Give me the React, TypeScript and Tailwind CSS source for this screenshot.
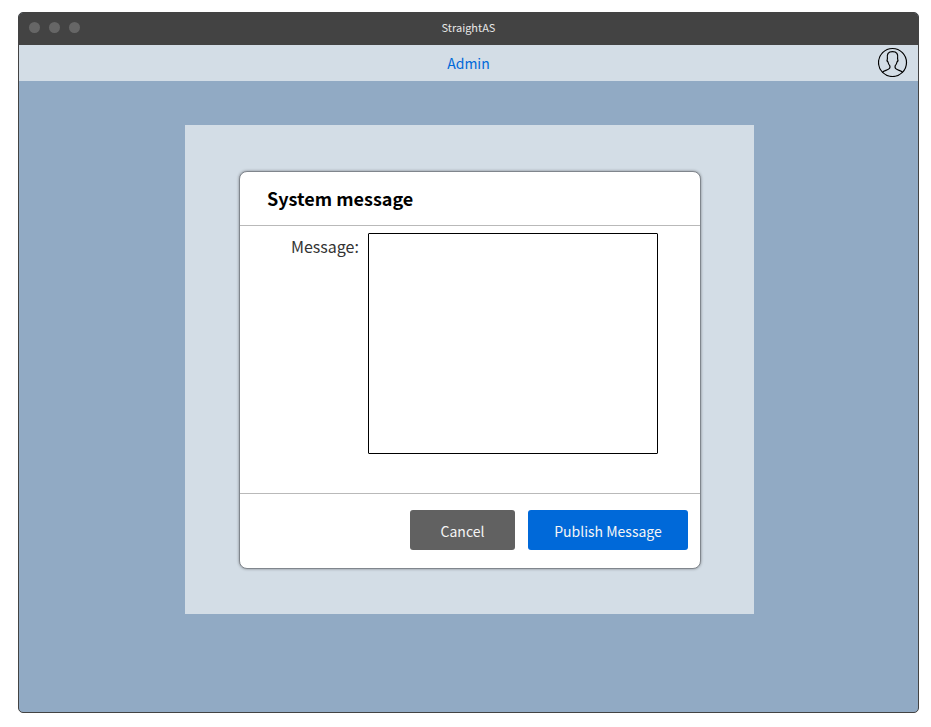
import { useState } from "react";

function TitleBar() {
  return (
    <div className="relative flex h-8 shrink-0 items-center justify-center bg-[#434343] pb-1 text-[11px] leading-4 text-[#e6e6e6]">
      <div className="absolute top-[9px] left-[10px] flex gap-[9px]">
        <span className="size-[11px] rounded-full bg-[#666666]" />
        <span className="size-[11px] rounded-full bg-[#666666]" />
        <span className="size-[11px] rounded-full bg-[#666666]" />
      </div>
      <h1>StraightAS</h1>
    </div>
  );
}

function NavBar() {
  return (
    <nav className="grid h-9 shrink-0 grid-cols-[1fr_auto_1fr] items-center bg-[#d3dde6] pr-[10px]">
      <a href="#admin" className="col-start-2 pl-[10px] text-sm text-[#0069d9]">
        Admin
      </a>
      <button type="button" aria-label="Profile" className="justify-self-end pb-[2px]">
        <svg
          viewBox="0 0 30 30"
          className="block size-[30px]"
          fill="none"
          stroke="#000000"
          strokeWidth="1.2"
          strokeLinejoin="round"
        >
          <circle cx="14.5" cy="15.5" r="14" />
          <path d="M4.3 25.5 C5.2 24.2 6.8 23.7 8.8 23 C11.1 22.2 11.9 21.8 11.9 20.6 V18.9 C10.8 17.8 10.3 16.6 10 15 C9.1 14.2 8.9 12.6 9.4 11.7 C8.6 7 10.3 4.7 14.5 4.7 C18.7 4.7 20.4 7 19.6 11.7 C20.1 12.6 19.9 14.2 19 15 C18.7 16.6 18.2 17.8 17.1 18.9 V20.6 C17.1 21.8 17.9 22.2 20.2 23 C22.2 23.7 23.8 24.2 24.7 25.5" />
        </svg>
      </button>
    </nav>
  );
}

function MessageDialog() {
  const [message, setMessage] = useState("");
  return (
    <form
      role="dialog"
      aria-labelledby="dialog-title"
      onSubmit={(e) => e.preventDefault()}
      className="rounded-lg border border-[#80868d] bg-white shadow-[0_0_3px_rgba(0,0,0,0.4)]"
    >
      <header className="flex h-[54px] items-center border-b border-[#b9b9b9] pb-[2px] pl-[27px]">
        <h2 id="dialog-title" className="text-lg leading-6 font-bold text-black">
          System message
        </h2>
      </header>
      <div className="flex items-start border-b border-[#b9b9b9] pt-[7px] pr-[42px] pb-[39px] pl-[51px]">
        <label htmlFor="message" className="w-[77px] shrink-0 pt-px text-base text-[#333333]">
          Message:
        </label>
        <textarea
          id="message"
          value={message}
          onChange={(e) => setMessage(e.target.value)}
          className="block h-[221px] min-w-0 flex-1 resize-none rounded-[1px] border border-black bg-white p-2 text-sm outline-none"
        />
      </div>
      <footer className="flex justify-end gap-[13px] px-3 pt-4 pb-[18px] text-sm text-[#f5f5f5]">
        <button type="button" className="h-10 w-[105px] rounded-[3px] bg-[#616161] pt-[2px]">
          Cancel
        </button>
        <button type="submit" className="h-10 w-40 rounded-[3px] bg-[#0069d9] pt-[2px]">
          Publish Message
        </button>
      </footer>
    </form>
  );
}

export default function App() {
  return (
    <div className="flex min-h-screen flex-col bg-white pt-3 pr-3 pb-[14px] pl-[18px] font-['Noto_Sans_CJK_SC','Noto_Sans',sans-serif]">
      <div className="flex flex-1 flex-col overflow-hidden rounded-[5px] border border-[#434343] bg-[#91aac4]">
        <TitleBar />
        <NavBar />
        <main className="flex flex-1 flex-col items-center py-11 pl-[2px]">
          <section className="w-full max-w-[569px] bg-[#d3dde6] pt-[46px] pr-[53px] pb-[45px] pl-[54px]">
            <MessageDialog />
          </section>
        </main>
      </div>
    </div>
  );
}
